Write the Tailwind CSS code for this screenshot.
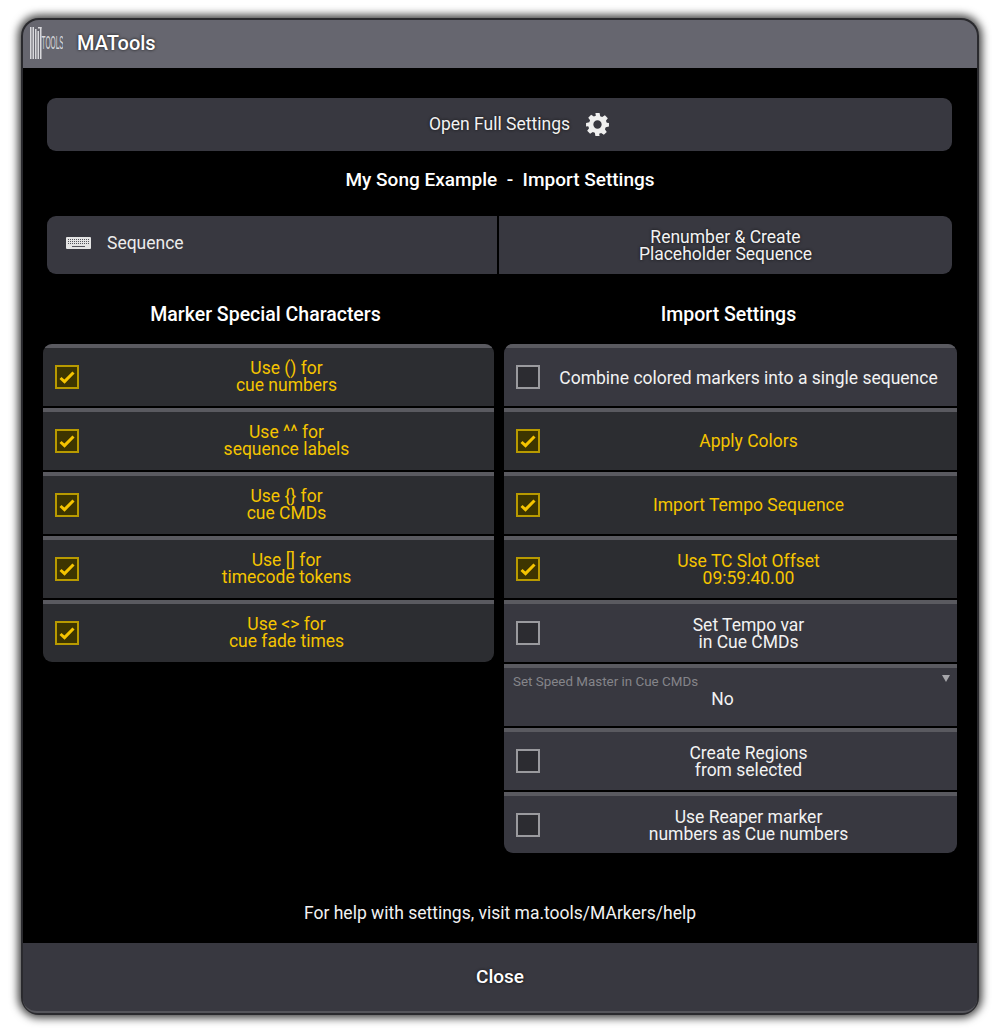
<!DOCTYPE html>
<html lang="en">
<head>
<meta charset="UTF-8">
<title>MATools</title>
<script src="https://cdn.jsdelivr.net/npm/@tailwindcss/browser@4"></script>
</head>
<body class="bg-white w-[1000px] h-[1033px] overflow-hidden font-['Roboto',sans-serif] text-[17.5px] leading-[17px]">
<div class="pt-[18px] pl-[21px]">
  <div class="w-[958px] h-[997px] rounded-[18px] bg-[#2a2a2e] p-[2px] flex flex-col overflow-hidden shadow-[0_0_9px_3px_rgba(0,0,0,0.75)]">
    <!-- title bar -->
    <div class="h-[48px] shrink-0 bg-[#66666f] rounded-t-[16px] flex items-center pl-[7px] pb-[2px] text-white font-medium text-[20px] [text-shadow:0_0_3px_#111]">
      <svg width="33" height="34" viewBox="0 0 33 34" class="mr-[14px]">
        <g fill="#d8d8dc">
          <rect x="0" y="1" width="1.5" height="32"/><rect x="2.5" y="1" width="1.5" height="32"/>
          <rect x="5" y="3" width="1.5" height="30"/><rect x="7.5" y="5" width="1.5" height="28"/>
          <rect x="10" y="1" width="1.5" height="32"/><rect x="8" y="1" width="3.5" height="1.5"/>
        </g>
        <text transform="translate(11.5 23) scale(0.47 1.25)" font-family="Liberation Sans" font-size="14" fill="#d8d8dc" style="text-shadow:none">TOOLS</text>
      </svg>
      <span>MATools</span>
    </div>

    <!-- content -->
    <div class="h-[875px] shrink-0 bg-black flex flex-col text-white">
      <div class="ml-[24px] mr-[25px] mt-[30px] h-[53px] rounded-[9px] bg-[#383840] flex items-center justify-center text-[#f2f2f2] [text-shadow:0_0_3px_#111]">
        <span class="relative">Open Full Settings
          <svg width="25" height="25" viewBox="0 0 24 24" fill="#efefef" class="absolute left-full top-[-4px] ml-[15px]">
            <path fill-rule="evenodd" d="M10 1h4l.6 3.1 1.9.8 2.6-1.8 2.8 2.8-1.8 2.6.8 1.9L23 10.500v3.500l-3.100.6-.8 1.900 1.800 2.600-2.800 2.800-2.600-1.800-1.900.8L14 23h-4l-.6-3.100-1.900-.8-2.600 1.800-2.800-2.800 1.800-2.600-.8-1.900L1 14v-3.500l3.100-.6.8-1.900-1.800-2.600 2.800-2.800 2.600 1.800 1.900-.8zM12 8a4 4 0 1 0 0 8 4 4 0 0 0 0-8z"/>
          </svg>
        </span>
      </div>

      <div class="mt-[19px] text-center font-medium text-[19px] leading-[20px]">My Song Example &nbsp;-&nbsp; Import Settings</div>

      <div class="ml-[24px] mr-[25px] mt-[26px] h-[58px] rounded-[9px] bg-[#383840] flex overflow-hidden">
        <div class="w-[452px] flex items-center pl-[19px] pb-[4px] border-r-2 border-black text-[#ececec]">
          <svg width="25" height="12" viewBox="0 0 25 12" class="mr-[16px]">
            <rect width="25" height="12" rx="1" fill="#e4e4e4"/>
            <g stroke="#55555c" stroke-width="1" stroke-dasharray="1 1">
              <path d="M2 2.500h21M2 4.500h21M2 6.500h21"/>
            </g>
            <path d="M6 9.500h13" stroke="#55555c" stroke-width="1.200"/>
          </svg>
          <span>Sequence</span>
        </div>
        <div class="flex-1 flex items-center justify-center text-center pt-[1px] text-[#f2f2f2] [text-shadow:0_0_3px_#111]">Renumber &amp; Create<br>Placeholder Sequence</div>
      </div>

      <div class="mt-[31px] flex items-start pl-[20px] gap-[10px]">
        <!-- left column -->
        <div class="w-[451px]">
          <div class="text-center font-medium text-[19.5px] leading-[20px] h-[39px] pr-[6px]">Marker Special Characters</div>
          <div class="rounded-[9px] overflow-hidden flex flex-col gap-[2px]">
            <div class="h-[62px] bg-[#2c2d31] border-t-[4px] border-[#5a5a60] flex items-center pl-[12px] text-[#f5c400]">
              <span class="w-[24px] h-[24px] shrink-0 border-2 border-[#b89a00] bg-[#3d3500] flex items-center justify-center"><svg width="16" height="13" viewBox="0 0 16 13" fill="none" stroke="#f5c400" stroke-width="3"><path d="M1.500 7l4 3.600L14.500 1.500"/></svg></span>
              <span class="flex-1 text-center">Use () for<br>cue numbers</span>
            </div>
            <div class="h-[62px] bg-[#2c2d31] border-t-[4px] border-[#5a5a60] flex items-center pl-[12px] text-[#f5c400]">
              <span class="w-[24px] h-[24px] shrink-0 border-2 border-[#b89a00] bg-[#3d3500] flex items-center justify-center"><svg width="16" height="13" viewBox="0 0 16 13" fill="none" stroke="#f5c400" stroke-width="3"><path d="M1.500 7l4 3.600L14.500 1.500"/></svg></span>
              <span class="flex-1 text-center">Use ^^ for<br>sequence labels</span>
            </div>
            <div class="h-[62px] bg-[#2c2d31] border-t-[4px] border-[#5a5a60] flex items-center pl-[12px] text-[#f5c400]">
              <span class="w-[24px] h-[24px] shrink-0 border-2 border-[#b89a00] bg-[#3d3500] flex items-center justify-center"><svg width="16" height="13" viewBox="0 0 16 13" fill="none" stroke="#f5c400" stroke-width="3"><path d="M1.500 7l4 3.600L14.500 1.500"/></svg></span>
              <span class="flex-1 text-center">Use {} for<br>cue CMDs</span>
            </div>
            <div class="h-[62px] bg-[#2c2d31] border-t-[4px] border-[#5a5a60] flex items-center pl-[12px] text-[#f5c400]">
              <span class="w-[24px] h-[24px] shrink-0 border-2 border-[#b89a00] bg-[#3d3500] flex items-center justify-center"><svg width="16" height="13" viewBox="0 0 16 13" fill="none" stroke="#f5c400" stroke-width="3"><path d="M1.500 7l4 3.600L14.500 1.500"/></svg></span>
              <span class="flex-1 text-center">Use [] for<br>timecode tokens</span>
            </div>
            <div class="h-[62px] bg-[#2c2d31] border-t-[4px] border-[#5a5a60] flex items-center pl-[12px] text-[#f5c400]">
              <span class="w-[24px] h-[24px] shrink-0 border-2 border-[#b89a00] bg-[#3d3500] flex items-center justify-center"><svg width="16" height="13" viewBox="0 0 16 13" fill="none" stroke="#f5c400" stroke-width="3"><path d="M1.500 7l4 3.600L14.500 1.500"/></svg></span>
              <span class="flex-1 text-center">Use &lt;&gt; for<br>cue fade times</span>
            </div>
          </div>
        </div>

        <!-- right column -->
        <div class="w-[453px]">
          <div class="text-center font-medium text-[19.5px] leading-[20px] h-[39px] pr-[4px]">Import Settings</div>
          <div class="rounded-[9px] overflow-hidden flex flex-col gap-[2px]">
            <div class="h-[62px] bg-[#383840] border-t-[4px] border-[#5a5a60] flex items-center pl-[12px] text-[#f2f2f2]">
              <span class="w-[24px] h-[24px] shrink-0 border-2 border-[#9a9a9e] bg-[#2c2c31]"></span>
              <span class="flex-1 text-center pt-[2px]">Combine colored markers into a single sequence</span>
            </div>
            <div class="h-[62px] bg-[#2c2d31] border-t-[4px] border-[#5a5a60] flex items-center pl-[12px] text-[#f5c400]">
              <span class="w-[24px] h-[24px] shrink-0 border-2 border-[#b89a00] bg-[#3d3500] flex items-center justify-center"><svg width="16" height="13" viewBox="0 0 16 13" fill="none" stroke="#f5c400" stroke-width="3"><path d="M1.500 7l4 3.600L14.500 1.500"/></svg></span>
              <span class="flex-1 text-center">Apply Colors</span>
            </div>
            <div class="h-[62px] bg-[#2c2d31] border-t-[4px] border-[#5a5a60] flex items-center pl-[12px] text-[#f5c400]">
              <span class="w-[24px] h-[24px] shrink-0 border-2 border-[#b89a00] bg-[#3d3500] flex items-center justify-center"><svg width="16" height="13" viewBox="0 0 16 13" fill="none" stroke="#f5c400" stroke-width="3"><path d="M1.500 7l4 3.600L14.500 1.500"/></svg></span>
              <span class="flex-1 text-center">Import Tempo Sequence</span>
            </div>
            <div class="h-[62px] bg-[#2c2d31] border-t-[4px] border-[#5a5a60] flex items-center pl-[12px] text-[#f5c400]">
              <span class="w-[24px] h-[24px] shrink-0 border-2 border-[#b89a00] bg-[#3d3500] flex items-center justify-center"><svg width="16" height="13" viewBox="0 0 16 13" fill="none" stroke="#f5c400" stroke-width="3"><path d="M1.500 7l4 3.600L14.500 1.500"/></svg></span>
              <span class="flex-1 text-center pt-[2px]">Use TC Slot Offset<br>09:59:40.00</span>
            </div>
            <div class="h-[62px] bg-[#383840] border-t-[4px] border-[#5a5a60] flex items-center pl-[12px] text-[#f2f2f2]">
              <span class="w-[24px] h-[24px] shrink-0 border-2 border-[#9a9a9e] bg-[#2c2c31]"></span>
              <span class="flex-1 text-center pt-[2px]">Set Tempo var<br>in Cue CMDs</span>
            </div>
            <div class="relative h-[62px] bg-[#383840] border-t-[4px] border-[#5a5a60] pl-[9px] text-[#f2f2f2]">
              <div class="pt-[6px] text-[13.4px] leading-[15px] text-[#85858a]">Set Speed Master in Cue CMDs</div>
              <div class="pr-[25px] text-center leading-[20px]">No</div>
              <span class="absolute right-[7px] top-[7px] w-0 h-0 border-x-[4px] border-x-transparent border-t-[7px] border-t-[#a6a6aa]"></span>
            </div>
            <div class="h-[62px] bg-[#383840] border-t-[4px] border-[#5a5a60] flex items-center pl-[12px] text-[#f2f2f2]">
              <span class="w-[24px] h-[24px] shrink-0 border-2 border-[#9a9a9e] bg-[#2c2c31]"></span>
              <span class="flex-1 text-center pt-[2px]">Create Regions<br>from selected</span>
            </div>
            <div class="h-[61px] bg-[#383840] border-t-[4px] border-[#5a5a60] flex items-center pl-[12px] text-[#f2f2f2]">
              <span class="w-[24px] h-[24px] shrink-0 border-2 border-[#9a9a9e] bg-[#2c2c31]"></span>
              <span class="flex-1 text-center pt-[2px]">Use Reaper marker<br>numbers as Cue numbers</span>
            </div>
          </div>
        </div>
      </div>

      <div class="mt-auto mb-[20px] text-center leading-[20px] text-[#f2f2f2]">For help with settings, visit ma.tools/MArkers/help</div>
    </div>

    <!-- footer -->
    <div class="flex-1 bg-[#383840] rounded-b-[14px] border-b-2 border-[#55555b] flex items-center justify-center pb-[2px] text-white font-medium text-[19px] [text-shadow:0_0_3px_#111]">Close</div>
  </div>
</div>
</body>
</html>
